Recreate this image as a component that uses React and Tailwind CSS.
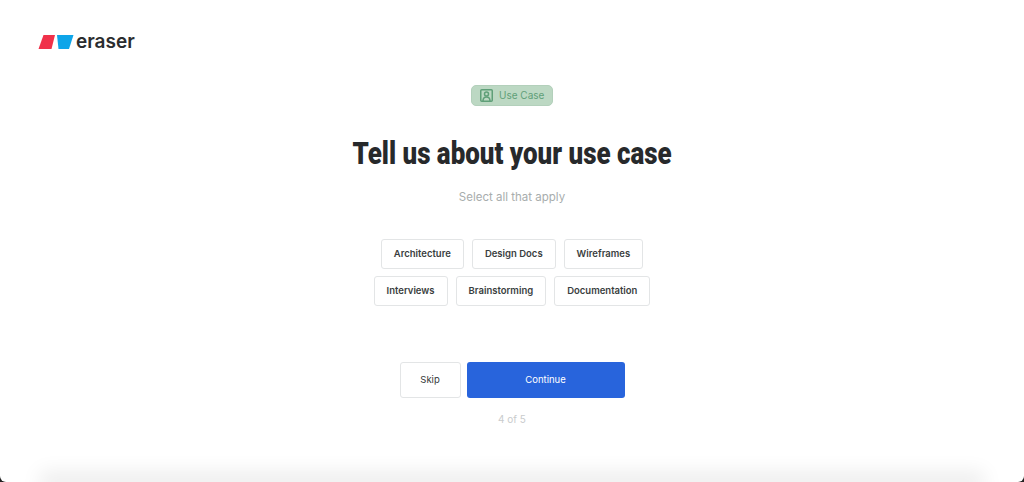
import React from 'react';

const ROWS = [
  ['Architecture', 'Design Docs', 'Wireframes'],
  ['Interviews', 'Brainstorming', 'Documentation'],
];

const Logo = () => (
  <div className="flex items-center">
    <svg width="36" height="14" viewBox="0 0 36 14" className="block">
      <path d="M5.5 0H17L13.5 14H0.5Z" fill="#f0314a" />
      <path d="M19 0H35.5L31 14H20.5Z" fill="#0ea5e9" />
    </svg>
    <span className="ml-[2px] text-[19px] leading-[20px] font-semibold text-[#2b2d2f]">eraser</span>
  </div>
);

const BadgeIcon = () => (
  <svg width="13" height="13" viewBox="0 0 13 13" fill="none" stroke="#5f9f78" strokeWidth="1.5">
    <rect x="0.75" y="0.75" width="11.5" height="11.5" rx="1" />
    <circle cx="6.5" cy="5" r="2" />
    <path d="M3 12c0-2.6 1.4-4 3.5-4s3.5 1.4 3.5 4" />
  </svg>
);

export default function App() {
  return (
    <div className="h-[482px] overflow-hidden bg-[#222] font-['Inter',sans-serif]">
      <div className="flex h-full flex-col overflow-hidden rounded-b-[6px] bg-white">
        <div className="pl-[38px] pt-[32px]">
          <Logo />
        </div>
        <div className="mt-[33px] flex flex-col items-center">
          <div className="flex h-[21px] w-[82px] items-center gap-[6px] rounded-[5px] border border-[#b3d0bb] bg-[#bcd8c3] pl-[8px] text-[10px] text-[#5f9f78]">
            <BadgeIcon />
            <span>Use Case</span>
          </div>
          <h1 className="mt-[24px] h-[46px] origin-center scale-x-[0.81] whitespace-nowrap text-[32px] leading-[46px] font-black text-[#27292b] font-['Roboto',sans-serif]">
            Tell us about your use case
          </h1>
          <p className="mt-[11px] text-[11.5px] leading-[20px] text-[#a8adad]">Select all that apply</p>
          <div className="mt-[32px] flex flex-col items-center gap-[7px]">
            {ROWS.map((row) => (
              <div key={row[0]} className="flex gap-[8px]">
                {row.map((label) => (
                  <button
                    key={label}
                    className="h-[30px] rounded-[3px] border border-[#e3e5e6] bg-white px-[12px] text-[9.5px] font-semibold text-[#3a3e40]"
                  >
                    {label}
                  </button>
                ))}
              </div>
            ))}
          </div>
          <div className="mt-[56px] flex gap-[6px]">
            <button className="h-[36px] w-[61px] rounded-[3px] border border-[#e3e5e6] bg-white text-[9.5px] text-[#34383a]">
              Skip
            </button>
            <button className="h-[36px] w-[158px] rounded-[3px] bg-[#2864dc] text-[9.5px] text-white">
              Continue
            </button>
          </div>
          <p className="mt-[12px] text-[10px] leading-[18px] text-[#c9cbcc]">4 of 5</p>
        </div>
        <div className="mx-[50px] mt-auto h-0 shrink-0 shadow-[0_0_20px_10px_rgba(0,0,0,0.08)]" />
      </div>
    </div>
  );
}
